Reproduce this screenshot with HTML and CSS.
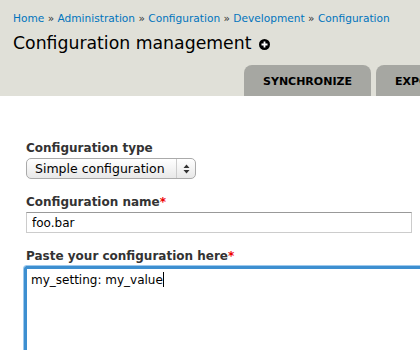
FILE: index.html
```html
<!DOCTYPE html>
<html lang="en">
<head>
    <meta charset="UTF-8">
    <title>Configuration management</title>
    <link rel="stylesheet" href="styles.css">
</head>
<body>

    <div class="header">
        <div class="breadcrumb">
            <a href="#">Home</a> » <a href="#">Administration</a> » <a href="#">Configuration</a> » <a href="#">Development</a> » <a href="#">Configuration</a>
        </div>
        <h1 class="page-title">Configuration management
            <svg class="shortcut" width="11" height="11" viewBox="0 0 11 11">
                <circle cx="5.5" cy="5.5" r="5.5" fill="#000"/>
                <path d="M5.5 2.5v6M2.5 5.5h6" stroke="#fff" stroke-width="1.8"/>
            </svg>
        </h1>
        <ul class="tabs">
            <li class="tab">SYNCHRONIZE</li>
            <li class="tab">EXPORT</li>
        </ul>
    </div>

    <div class="content">
        <div class="form-item">
            <label>Configuration type</label>
            <div class="select">
                <span class="select-value">Simple configuration</span>
                <span class="select-arrows">
                    <svg width="7" height="10" viewBox="0 0 7 10">
                        <path d="M3.5 0.5L6.5 4H0.5z M3.5 9.5L6.5 6H0.5z" fill="#333"/>
                    </svg>
                </span>
            </div>
        </div>

        <div class="form-item">
            <label>Configuration name<span class="required">*</span></label>
            <input type="text" class="text-input" value="foo.bar">
        </div>

        <div class="form-item">
            <label>Paste your configuration here<span class="required">*</span></label>
            <div class="textarea">my_setting: my_value<span class="caret"></span></div>
        </div>
    </div>

</body>
</html>
```

FILE: styles.css
```css
body {
    margin: 0;
    font-family: "DejaVu Sans", Verdana, sans-serif;
    color: #333;
    background-color: #fff;
    overflow: hidden;
}
.header {
    background-color: #e0e0d8;
    padding: 12px 0 0 13px;
    height: 84px;
    display: flex;
    flex-direction: column;
}
.breadcrumb {
    font-size: 10.6px;
    color: #333;
    white-space: nowrap;
}
.breadcrumb a {
    color: #0074bd;
    text-decoration: none;
}
.page-title {
    margin: 9px 0 0 0;
    font-size: 17.3px;
    font-weight: normal;
    color: #000;
    white-space: nowrap;
    display: flex;
    align-items: center;
    gap: 8px;
}
.shortcut {
    margin-top: 2px;
}
.tabs {
    list-style: none;
    margin: auto 0 0 231px;
    padding: 0;
    display: flex;
    gap: 5px;
    white-space: nowrap;
}
.tab {
    background-color: #a6a7a2;
    border-radius: 8px 8px 0 0;
    height: 31px;
    line-height: 33px;
    padding: 0 19px;
    font-size: 11px;
    font-weight: bold;
    color: #000;
    flex-shrink: 0;
}
.content {
    padding: 45px 0 0 26px;
}
.form-item {
    margin-bottom: 16px;
}
label {
    display: block;
    font-size: 12px;
    font-weight: bold;
    color: #333;
    margin-bottom: 3px;
}
.required {
    color: #e00;
}
.select {
    display: flex;
    width: 168px;
    height: 19px;
    border: 1px solid #aaa;
    border-radius: 5px;
    background: linear-gradient(#fff, #e8e8e8);
    font-size: 12.5px;
    line-height: 19px;
    color: #000;
    align-items: center;
}
.select-value {
    flex: 1;
    padding-left: 8px;
}
.select-arrows {
    width: 18px;
    height: 100%;
    border-left: 1px solid #ccc;
    display: flex;
    align-items: center;
    justify-content: center;
}
.text-input {
    display: block;
    box-sizing: border-box;
    width: 386px;
    height: 21px;
    margin: 0;
    padding: 1px 5px;
    border: 1px solid #ccc;
    border-top-color: #999;
    font-family: "DejaVu Sans", Verdana, sans-serif;
    font-size: 12px;
    color: #000;
}
.textarea {
    box-sizing: border-box;
    width: 420px;
    height: 110px;
    margin-left: -2px;
    padding: 3px 4px;
    border: 3px solid #3d8fd0;
    border-radius: 3px;
    box-shadow: 0 0 0 1px #9cc9ee;
    font-size: 12px;
    color: #000;
}
.caret {
    display: inline-block;
    width: 1px;
    height: 15px;
    background-color: #000;
    vertical-align: -3px;
}
```
